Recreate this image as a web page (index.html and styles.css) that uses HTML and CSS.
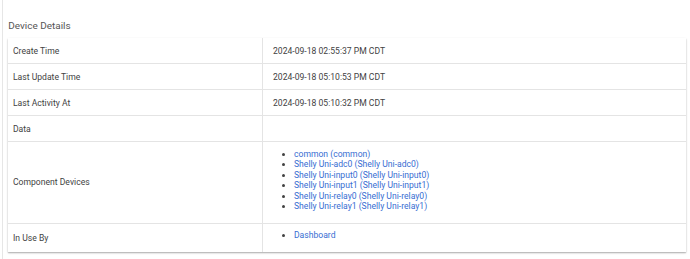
FILE: index.html
```html
<!DOCTYPE html>
<html lang="en">
<head>
<meta charset="utf-8">
<title>Device Details</title>
<link rel="stylesheet" href="styles.css">
</head>
<body>
<div class="page">
  <h2 class="title">Device Details</h2>
  <div class="card">
    <table class="details">
      <tbody>
        <tr class="row">
          <td class="label">Create Time</td>
          <td class="value">2024-09-18 02:55:37 PM CDT</td>
        </tr>
        <tr class="row">
          <td class="label">Last Update Time</td>
          <td class="value">2024-09-18 05:10:53 PM CDT</td>
        </tr>
        <tr class="row">
          <td class="label">Last Activity At</td>
          <td class="value">2024-09-18 05:10:32 PM CDT</td>
        </tr>
        <tr class="row">
          <td class="label">Data</td>
          <td class="value"></td>
        </tr>
        <tr class="row-list">
          <td class="label">Component Devices</td>
          <td class="value list-cell">
            <ul class="links">
              <li><a href="#">common (common)</a></li>
              <li><a href="#">Shelly Uni-adc0 (Shelly Uni-adc0)</a></li>
              <li><a href="#">Shelly Uni-input0 (Shelly Uni-input0)</a></li>
              <li><a href="#">Shelly Uni-input1 (Shelly Uni-input1)</a></li>
              <li><a href="#">Shelly Uni-relay0 (Shelly Uni-relay0)</a></li>
              <li><a href="#">Shelly Uni-relay1 (Shelly Uni-relay1)</a></li>
            </ul>
          </td>
        </tr>
        <tr class="row-list last">
          <td class="label">In Use By</td>
          <td class="value list-cell">
            <ul class="links">
              <li><a href="#">Dashboard</a></li>
            </ul>
          </td>
        </tr>
      </tbody>
    </table>
  </div>
</div>
</body>
</html>
```
FILE: styles.css
```css
html, body {
  margin: 0;
  padding: 0;
  background: #ffffff;
}

body {
  font-family: Roboto, "Liberation Sans", Arial, sans-serif;
  color: #424242;
  width: 690px;
  height: 259px;
  overflow: hidden;
}

.page {
  margin-left: 2px;
  border-left: 1px solid #e6e6e6;
  padding-left: 5.3px;
  height: 259px;
  box-sizing: border-box;
}

.title {
  margin: 0;
  padding-top: 20.3px;
  font-size: 9.95px;
  line-height: 12px;
  font-weight: 400;
  color: #555555;
  margin-bottom: 6px;
}

.card {
  width: 677.5px;
  background: #ffffff;
  box-shadow: 0 1px 2px rgba(0, 0, 0, 0.22), 0 1px 1px rgba(0, 0, 0, 0.12);
}

.details {
  width: 100%;
  border-collapse: collapse;
  font-size: 8.6px;
  line-height: 10.5px;
}

.details td {
  border-bottom: 1px solid #e4e4e4;
  padding: 0;
  vertical-align: middle;
}

.details tr.last td {
  border-bottom: none;
}

.row td {
  height: 25px;
}

.label {
  width: 249px;
  padding-left: 4.7px !important;
  border-right: 1px solid #e4e4e4;
}

.value {
  padding-left: 10px !important;
}

.list-cell {
  padding-top: 6.3px !important;
  padding-bottom: 11.5px !important;
}

.links {
  margin: 0;
  padding-left: 21px;
  list-style: disc;
}

.links li {
  line-height: 10.5px;
}

.links a {
  color: #376dd2;
  text-decoration: none;
}
```
